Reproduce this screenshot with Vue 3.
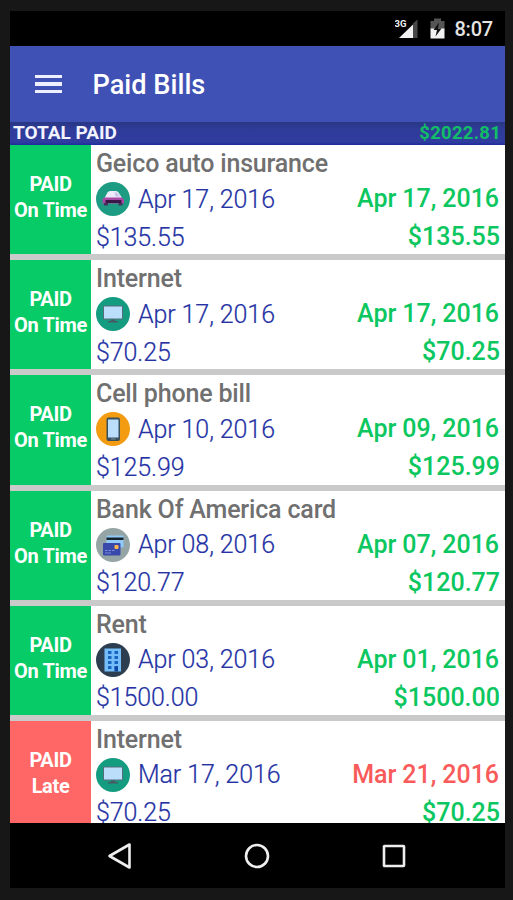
<template>
  <div class="device">
    <div class="screen">
      <div class="status-bar">
        <svg class="signal" width="24" height="22" viewBox="0 0 24 22">
          <path d="M18 5.500L22.500 1.500V20H18Z" fill="#484848" />
          <path d="M4 20L18 6.500V20Z" fill="#f2f2f2" />
          <text x="-0.5" y="9" class="network">3G</text>
        </svg>
        <svg class="battery" width="15" height="21" viewBox="0 0 15 21">
          <path d="M0.5 3H4V0.5H11V3H14.5V11H0.5Z" fill="#555" />
          <path d="M0.5 10.5H14.5V20.5H0.5Z" fill="#f2f2f2" />
          <path d="M9 4.5L3.5 12H7L5.5 18.5L11.5 10.5H8Z" fill="#111" />
        </svg>
        <span class="clock">8:07</span>
      </div>

      <div class="app-bar">
        <div class="menu"><i></i><i></i><i></i></div>
        <span class="title">Paid Bills</span>
      </div>

      <div class="total">
        <span class="total-label">TOTAL PAID</span>
        <span class="total-sum">$2022.81</span>
      </div>

      <div class="list">
        <div v-for="(bill, i) in bills" :key="i" class="bill">
          <div class="status" :class="{ late: bill.late }">
            <span>PAID</span>
            <span>{{ bill.late ? 'Late' : 'On Time' }}</span>
          </div>
          <div class="info">
            <div class="name">{{ bill.name }}</div>
            <div class="line dates">
              <svg class="icon" width="34" height="34" viewBox="0 0 34 34">
                <circle cx="17" cy="17" r="17" :fill="colors[bill.icon]" />
                <g v-if="bill.icon === 'car'">
                  <path d="M8 17L11.500 10.500Q12.500 9 14 9H20Q21.500 9 22.500 10.500L25.500 15L26 18H8Z" fill="#eeeafa" />
                  <path d="M18.500 10.500L19.500 14.500H24L21 10.500Z" fill="#c3c8e8" />
                  <path d="M6.500 17Q7 15.500 9 15.500H25.500Q28 16 28 18.500V21.500H6.500Z" fill="#a94aa5" />
                  <path d="M9.500 18H25.500V21H9.500Z" fill="#3b1748" />
                  <path d="M8 21H12V23.500H8ZM22.500 21H26.500V23.500H22.500Z" fill="#49305e" />
                </g>
                <g v-else-if="bill.icon === 'monitor'">
                  <rect x="7" y="8.500" width="20" height="14" rx="1" fill="#546e7a" />
                  <rect x="8" y="9.500" width="18" height="12" fill="#bbdefb" />
                  <path d="M15 22.500H19V24H22V25.500H12V24H15Z" fill="#455a64" />
                </g>
                <g v-else-if="bill.icon === 'phone'">
                  <rect x="10.500" y="5.500" width="13.500" height="23.500" rx="2" fill="#37505c" />
                  <rect x="12" y="7.500" width="10.500" height="18" fill="#bbdefb" />
                  <rect x="15" y="26.500" width="4.500" height="1" fill="#78909c" />
                </g>
                <g v-else-if="bill.icon === 'card'">
                  <rect x="10.500" y="7.500" width="17" height="12" rx="1" fill="#90caf9" />
                  <rect x="10.500" y="9.500" width="17" height="2.500" fill="#17232b" />
                  <rect x="7" y="15" width="17.500" height="12.500" rx="1" fill="#3949ab" />
                  <rect x="18.500" y="17" width="4" height="4" rx="1" fill="#ffb74d" />
                  <path d="M9 22H11.500V23H9ZM12.500 22H15V23H12.500ZM16 22H18.500V23H16ZM9 24.500H15V25.500H9Z" fill="#7f8cd6" />
                </g>
                <g v-else>
                  <rect x="8.500" y="5.500" width="16.500" height="23" fill="#74bdf8" />
                  <template v-for="y in [8, 13, 18, 23]" :key="y">
                    <rect x="12" :y="y" width="3.500" height="3" fill="#1565c0" />
                    <rect x="18.500" :y="y" width="3.500" height="3" fill="#1565c0" />
                  </template>
                  <rect x="18.500" y="23.500" width="3.500" height="5" fill="#0d47a1" />
                </g>
              </svg>
              <span class="due">{{ bill.due }}</span>
              <span class="paid" :class="{ red: bill.late }">{{ bill.paid }}</span>
            </div>
            <div class="line">
              <span class="due">{{ bill.amount }}</span>
              <span class="paid amount">{{ bill.amount }}</span>
            </div>
          </div>
        </div>
      </div>

      <div class="nav-bar">
        <svg width="26" height="28" viewBox="0 0 26 28">
          <path d="M22.500 2.500V25.500L2.500 14Z" fill="none" stroke="#eee" stroke-width="2.600" stroke-linejoin="round" />
        </svg>
        <svg width="26" height="28" viewBox="0 0 26 28">
          <circle cx="13" cy="14" r="11" fill="none" stroke="#eee" stroke-width="2.600" />
        </svg>
        <svg width="26" height="28" viewBox="0 0 26 28">
          <rect x="3" y="4" width="20" height="20" rx="0.500" fill="none" stroke="#eee" stroke-width="2.600" />
        </svg>
      </div>
    </div>
  </div>
</template>

<script setup>
const colors = {
  car: '#1d9c83',
  monitor: '#149c80',
  phone: '#f39c12',
  card: '#95a5a6',
  building: '#2c3e50',
};

const bills = [
  { name: 'Geico auto insurance', icon: 'car', due: 'Apr 17, 2016', paid: 'Apr 17, 2016', amount: '$135.55' },
  { name: 'Internet', icon: 'monitor', due: 'Apr 17, 2016', paid: 'Apr 17, 2016', amount: '$70.25' },
  { name: 'Cell phone bill', icon: 'phone', due: 'Apr 10, 2016', paid: 'Apr 09, 2016', amount: '$125.99' },
  { name: 'Bank Of America card', icon: 'card', due: 'Apr 08, 2016', paid: 'Apr 07, 2016', amount: '$120.77' },
  { name: 'Rent', icon: 'building', due: 'Apr 03, 2016', paid: 'Apr 01, 2016', amount: '$1500.00' },
  { name: 'Internet', icon: 'monitor', due: 'Mar 17, 2016', paid: 'Mar 21, 2016', amount: '$70.25', late: true },
];
</script>

<style>
body { background: #171717; }
</style>

<style scoped>
.device {
  box-sizing: border-box;
  height: 900px;
  padding: 11px 8px 12px 10px;
  background: #171717;
  font-family: Roboto, "Liberation Sans", sans-serif;
  overflow: hidden;
}
.screen {
  display: flex;
  flex-direction: column;
  height: 877px;
  background: #000;
}
.status-bar {
  display: flex;
  align-items: center;
  justify-content: flex-end;
  flex: none;
  height: 35px;
  padding-right: 12px;
  color: #e4e4e4;
}
.network { font-size: 9.5px; font-weight: 700; fill: #f2f2f2; }
.signal { margin-right: 11px; }
.battery { margin-right: 9px; }
.clock { font-size: 20px; font-weight: 500; line-height: 37px; letter-spacing: -0.2px; padding-top: 2px; }
.app-bar {
  display: flex;
  align-items: center;
  flex: none;
  box-sizing: border-box;
  height: 76px;
  padding-left: 25px;
  background: #3f51b5;
}
.menu { display: flex; flex-direction: column; gap: 4px; width: 27px; }
.menu i { height: 3.5px; background: #eef0ff; }
.title { margin-left: 30.5px; padding-top: 2px; color: #fff; font-size: 27.2px; font-weight: 500; }
.total {
  display: flex;
  justify-content: space-between;
  flex: none;
  height: 23px;
  padding: 0 4px 0 3px;
  background: linear-gradient(#293784, #2f3c9b 8px, #303c9f 20px, #1c2c9b);
  font-size: 19px;
  font-weight: 700;
  line-height: 22px;
}
.total-label { color: #f2f3ff; }
.total-sum { color: #12bd67; font-size: 18.5px; letter-spacing: 0.25px; }
.list { flex: none; height: 678px; overflow: hidden; background: #fff; }
.bill {
  display: flex;
  box-sizing: border-box;
  height: 115.2px;
  border-bottom: 6px solid #cacaca;
}
.status {
  display: flex;
  flex-direction: column;
  align-items: center;
  justify-content: center;
  flex: none;
  width: 81px;
  padding-bottom: 5px;
  box-sizing: border-box;
  background: #06cb66;
  color: #fff;
  font-size: 20px;
  font-weight: 700;
  letter-spacing: -0.35px;
  line-height: 26px;
  white-space: nowrap;
}
.late { background: #ff6666; }
.info { flex: 1; padding: 0 5px 0 5px; }
.name { height: 35px; color: #707070; font-size: 25px; font-weight: 500; letter-spacing: -0.17px; line-height: 37px; }
.line { display: flex; align-items: center; height: 38px; font-size: 25px; line-height: 38px; }
.icon { margin-right: 8px; }
.due { padding-top: 1px; color: #2432a4; font-weight: 300; letter-spacing: -0.1px; -webkit-text-stroke: 0.2px #2432a4; }
.paid { margin-left: auto; color: #0cc75f; font-weight: 500; }
.dates .paid { margin-right: 1px; letter-spacing: -0.05px; }
.red { color: #f95b5b; }
.nav-bar {
  display: flex;
  align-items: center;
  justify-content: center;
  gap: 111px;
  height: 65px;
  padding-right: 1px;
}
</style>
